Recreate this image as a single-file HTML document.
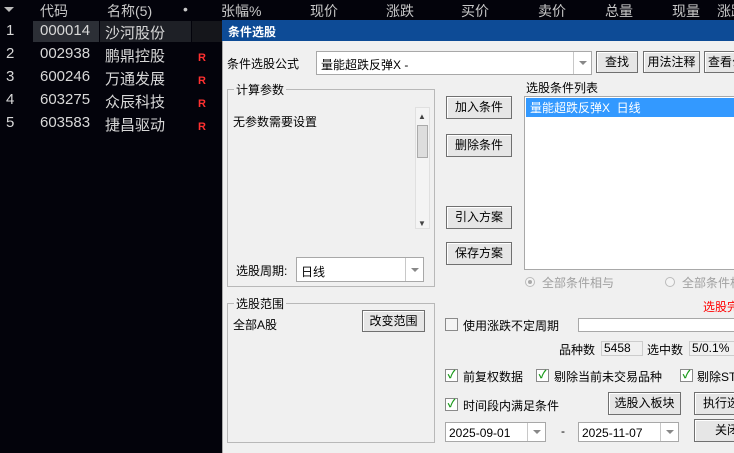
<!DOCTYPE html>
<html><head><meta charset="utf-8"><style>
*{margin:0;padding:0;box-sizing:border-box}
body{width:734px;height:453px;overflow:hidden;background:#03030b;position:relative;font-family:"Liberation Sans","Noto Sans CJK SC",sans-serif;}
.a{position:absolute;white-space:nowrap}
.h{color:#c8c8c8;font-size:14px;top:1px}
.r{color:#d8d8d8;font-size:15px}
.R{color:#ff3030;font-size:11px;font-weight:bold}
.d{font-size:12px;color:#000}
.btn{position:absolute;background:#e6e6e6;border:1px solid #707070;box-shadow:inset 1px 1px #fff;font-size:12px;text-align:center;color:#000;white-space:nowrap;overflow:hidden}
.box{position:absolute;background:#fff;border:1px solid #a8a8a8}
.grp{position:absolute;border:1px solid #b8b8b8}
.gl{position:absolute;background:#f0f0f0;font-size:12px;padding:0 2px;top:-9px;left:6px}
.dd{position:absolute;right:0;top:0;bottom:0;width:18px;border-left:1px solid #c8c8c8}
.dd:after{content:"";position:absolute;left:5px;top:50%;margin-top:-2px;border:4px solid transparent;border-top:4px solid #888}
.cb{position:absolute;width:13px;height:13px;border:1px solid #8a8a8a;background:#fff;color:#1a9a1a;font-size:11px;line-height:11px;text-align:center;font-weight:bold}
</style></head><body>
<div class="a" style="left:4px;top:7px;border:5px solid transparent;border-top:5px solid #bbb"></div>
<div class="a h" style="left:40px">代码</div>
<div class="a h" style="left:107px">名称(5)</div>
<div class="a h" style="left:183px">•</div>
<div class="a h" style="left:221px">张幅%</div>
<div class="a h" style="left:310px">现价</div>
<div class="a h" style="left:386px">涨跌</div>
<div class="a h" style="left:461px">买价</div>
<div class="a h" style="left:538px">卖价</div>
<div class="a h" style="left:605px">总量</div>
<div class="a h" style="left:672px">现量</div>
<div class="a h" style="left:717px">涨跌</div>
<div class="a" style="left:33px;top:21px;width:66px;height:21px;background:#2c2f36"></div>
<div class="a" style="left:100px;top:21px;width:91px;height:21px;background:#1e2026"></div>
<div class="a" style="left:192px;top:21px;width:30px;height:21px;background:#15161b"></div>
<div class="a r" style="left:6px;top:22px">1</div><div class="a r" style="left:40px;top:22px">000014</div><div class="a r" style="left:105px;top:22px">沙河股份</div>
<div class="a r" style="left:6px;top:45px">2</div><div class="a r" style="left:40px;top:45px">002938</div><div class="a r" style="left:105px;top:45px">鹏鼎控股</div><div class="a R" style="left:198px;top:52px">R</div>
<div class="a r" style="left:6px;top:68px">3</div><div class="a r" style="left:40px;top:68px">600246</div><div class="a r" style="left:105px;top:68px">万通发展</div><div class="a R" style="left:198px;top:75px">R</div>
<div class="a r" style="left:6px;top:91px">4</div><div class="a r" style="left:40px;top:91px">603275</div><div class="a r" style="left:105px;top:91px">众辰科技</div><div class="a R" style="left:198px;top:98px">R</div>
<div class="a r" style="left:6px;top:114px">5</div><div class="a r" style="left:40px;top:114px">603583</div><div class="a r" style="left:105px;top:114px">捷昌驱动</div><div class="a R" style="left:198px;top:121px">R</div>

<div class="a" style="left:222px;top:20px;width:512px;height:433px;background:#f0f0f0;border-left:1px solid #aaa"></div>
<div class="a" style="left:222px;top:20px;width:512px;height:21px;background:#0d4b96;color:#fff;font-size:12px;font-weight:bold;padding:3px 0 0 6px">条件选股</div>

<div class="a d" style="left:227px;top:55px">条件选股公式</div>
<div class="box" style="left:316px;top:51px;width:276px;height:24px"><span class="a d" style="left:4px;top:4px">量能超跌反弹X -</span><div class="dd"></div></div>
<div class="btn" style="left:596px;top:51px;width:42px;height:22px;line-height:20px">查找</div>
<div class="btn" style="left:643px;top:51px;width:57px;height:22px;line-height:20px">用法注释</div>
<div class="btn" style="left:704px;top:51px;width:40px;height:22px;line-height:20px;text-align:left;padding-left:3px">查看公</div>

<div class="grp" style="left:227px;top:89px;width:208px;height:198px"><span class="gl">计算参数</span></div>
<div class="a d" style="left:233px;top:113px">无参数需要设置</div>
<div class="a" style="left:415px;top:107px;width:15px;height:122px;background:#f4f4f4;border:1px solid #e0e0e0"></div>
<div class="a" style="left:417px;top:125px;width:11px;height:33px;background:#ddd;border:1px solid #aaa"></div>
<div class="a" style="left:418px;top:112px;font-size:8px;color:#444">▲</div>
<div class="a" style="left:418px;top:219px;font-size:8px;color:#444">▼</div>
<div class="a d" style="left:236px;top:262px">选股周期:</div>
<div class="box" style="left:296px;top:257px;width:128px;height:25px"><span class="a d" style="left:4px;top:5px">日线</span><div class="dd"></div></div>

<div class="grp" style="left:227px;top:303px;width:208px;height:140px"><span class="gl">选股范围</span></div>
<div class="a d" style="left:233px;top:316px">全部A股</div>
<div class="btn" style="left:362px;top:310px;width:63px;height:22px;line-height:20px">改变范围</div>

<div class="btn" style="left:446px;top:96px;width:66px;height:23px;line-height:21px">加入条件</div>
<div class="btn" style="left:446px;top:134px;width:66px;height:23px;line-height:21px">删除条件</div>
<div class="btn" style="left:446px;top:206px;width:66px;height:23px;line-height:21px">引入方案</div>
<div class="btn" style="left:446px;top:242px;width:66px;height:23px;line-height:21px">保存方案</div>

<div class="a d" style="left:526px;top:79px">选股条件列表</div>
<div class="box" style="left:524px;top:96px;width:215px;height:174px"></div>
<div class="a" style="left:526px;top:98px;width:210px;height:19px;background:#3399ff;color:#fff;font-size:12px;padding:1px 0 0 4px">量能超跌反弹X&nbsp;&nbsp;日线</div>
<div class="a" style="left:525px;top:277px;width:10px;height:10px;border-radius:50%;border:1px solid #bbb;background:#f4f4f4"></div>
<div class="a" style="left:528px;top:280px;width:4px;height:4px;border-radius:50%;background:#aaa"></div>
<div class="a" style="left:542px;top:274px;font-size:12px;color:#a0a0a0">全部条件相与</div>
<div class="a" style="left:665px;top:277px;width:10px;height:10px;border-radius:50%;border:1px solid #bbb;background:#f4f4f4"></div>
<div class="a" style="left:682px;top:274px;font-size:12px;color:#a0a0a0">全部条件相</div>
<div class="a" style="left:703px;top:298px;font-size:12px;color:#f00">选股完</div>

<div class="cb" style="left:445px;top:318px;background:#f4f4f4"></div>
<div class="a d" style="left:463px;top:317px">使用涨跌不定周期</div>
<div class="box" style="left:578px;top:318px;width:160px;height:14px"></div>
<div class="a d" style="left:559px;top:341px">品种数</div>
<div class="a" style="left:601px;top:341px;width:42px;height:15px;border:1px solid #ccc;font-size:12px;padding-left:2px;line-height:13px">5458</div>
<div class="a d" style="left:647px;top:341px">选中数</div>
<div class="a" style="left:689px;top:341px;width:50px;height:15px;border:1px solid #ccc;font-size:12px;padding-left:2px;line-height:13px">5/0.1%</div>

<div class="cb" style="left:445px;top:369px">✓</div><div class="a d" style="left:463px;top:368px">前复权数据</div>
<div class="cb" style="left:536px;top:369px">✓</div><div class="a d" style="left:554px;top:368px">剔除当前未交易品种</div>
<div class="cb" style="left:680px;top:369px">✓</div><div class="a d" style="left:697px;top:368px">剔除ST</div>
<div class="cb" style="left:445px;top:398px">✓</div><div class="a d" style="left:463px;top:397px">时间段内满足条件</div>
<div class="btn" style="left:608px;top:392px;width:73px;height:23px;line-height:21px">选股入板块</div>
<div class="btn" style="left:694px;top:392px;width:50px;height:23px;line-height:21px;text-align:left;padding-left:8px">执行选</div>
<div class="box" style="left:445px;top:422px;width:101px;height:20px"><span class="a" style="left:3px;top:3px;font-size:12px">2025-09-01</span><div class="dd"></div></div>
<div class="a d" style="left:561px;top:424px">-</div>
<div class="box" style="left:578px;top:422px;width:101px;height:20px"><span class="a" style="left:3px;top:3px;font-size:12px">2025-11-07</span><div class="dd"></div></div>
<div class="btn" style="left:694px;top:419px;width:50px;height:23px;line-height:21px;text-align:left;padding-left:20px">关闭</div>
</body></html>
